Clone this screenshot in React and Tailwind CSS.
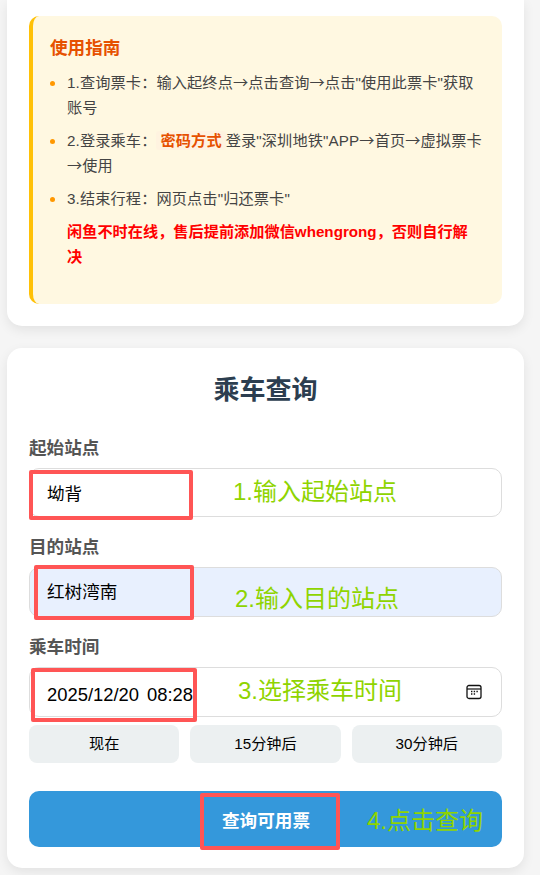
import React from 'react';

const FONT = "font-['Liberation_Sans','Noto_Sans_CJK_SC',sans-serif]";

// arrows are full width in the reference, Liberation's are too narrow
function Arrow() {
    return <span className="font-['Noto_Sans_CJK_SC',sans-serif] leading-none">→</span>;
}

function Note({ className, children }) {
    return <span className={`shrink-0 text-[24px] leading-[30px] font-normal text-[#8fd400] whitespace-nowrap ${className}`}>{children}</span>;
}

function Mark({ className, children }) {
    return <div className={`shrink-0 flex items-center border-[4px] border-[#ff5555] rounded-[2px] whitespace-nowrap ${className}`}>{children}</div>;
}

function GuideItem({ children }) {
    return (
        <li className="flex gap-3 leading-[25px]">
            <span className="shrink-0 mt-[11px] w-[5px] h-[5px] rounded-full bg-[#ff9800]" />
            <div>{children}</div>
        </li>
    );
}

function FieldLabel({ children }) {
    return <div className="text-[17.6px] leading-[24px] font-bold text-[#555] mb-2">{children}</div>;
}

function QuickButton({ children }) {
    return <button className="h-[38px] bg-[#ecf0f1] rounded-[8px] text-[15.2px] text-black">{children}</button>;
}

function CalendarIcon() {
    return (
        <svg className="shrink-0 ml-auto" width="16" height="16" viewBox="0 0 16 16" fill="none">
            <rect x="1" y="1.5" width="14" height="13" rx="2" stroke="#111" strokeWidth="1.3" />
            <path d="M1 5h14" stroke="#111" strokeWidth="1.2" />
            <path d="M5 7.5h1.4M7.7 7.5h1.4M10.4 7.5h1.4M5 10h1.4M7.7 10h1.4" stroke="#111" strokeWidth="1.4" />
        </svg>
    );
}

export default function App() {
    return (
        <div className={`${FONT} h-[875px] w-[540px] overflow-hidden bg-[#f5f5f5] pl-[7px] pr-[16px]`}>
            {/* Guide card */}
            <div className="bg-white rounded-b-[15px] shadow-[0_4px_12px_rgba(0,0,0,0.08)] px-[22px] pt-4 pb-[22px]">
                <div className="h-[288px] bg-[#fff8e1] border-l-4 border-[#ffc107] rounded-[10px] px-[17px] pt-[20px]">
                    <h3 className="text-[17.6px] leading-[24px] font-bold text-[#e65100] mb-[10px]">使用指南</h3>
                    <ul className="flex flex-col gap-2 text-[15.2px] tracking-[0.12px] text-[#444] mb-2">
                        <GuideItem>1.查询票卡：输入起终点<Arrow />点击查询<Arrow />点击"使用此票卡"获取账号</GuideItem>
                        <GuideItem>
                            2.登录乘车：<span className="inline-block font-bold text-[#e65100] bg-[#fff3e0] rounded-[3px] px-1 leading-[19px]">密码方式</span>登录"深圳地铁"APP<Arrow />首页<Arrow />虚拟票卡<Arrow />使用
                        </GuideItem>
                        <GuideItem>3.结束行程：网页点击"归还票卡"</GuideItem>
                    </ul>
                    <p className="pl-[17px] pr-[8px] text-[15.2px] leading-[25px] font-bold text-[#ff0000]">闲鱼不时在线，售后提前添加微信whengrong，否则自行解决</p>
                </div>
            </div>

            {/* Query card */}
            <div className="mt-[22px] bg-white rounded-[15px] shadow-[0_4px_12px_rgba(0,0,0,0.08)] px-[22px] pt-[22px] pb-[21px]">
                <h2 className="text-[26px] leading-[40px] font-bold text-center text-[#2c3e50] mb-[26px]">乘车查询</h2>

                <FieldLabel>起始站点</FieldLabel>
                <div className="h-[49px] mb-[18px] bg-white border border-[#ddd] rounded-[10px] flex items-center text-[17.6px] text-black">
                    <Mark className="-ml-px mt-[4px] w-[164px] h-[50px] pl-[14px]">坳背</Mark>
                    <Note className="ml-[40px] -mt-[2px]">1.输入起始站点</Note>
                </div>

                <FieldLabel>目的站点</FieldLabel>
                <div className="h-[50px] mb-[18px] bg-[#e8f0fe] border border-[#ddd] rounded-[10px] flex items-center text-[17.6px] text-black">
                    <Mark className="ml-[4px] w-[160px] h-[55px] pl-[9px]">红树湾南</Mark>
                    <Note className="ml-[41px] mt-[14px]">2.输入目的站点</Note>
                </div>

                <FieldLabel>乘车时间</FieldLabel>
                <div className="h-[50px] mb-2 bg-white border border-[#ddd] rounded-[10px] flex items-center pr-[19px] text-[18.4px] text-black">
                    <Mark className="ml-[1px] mt-[5px] w-[166px] h-[54px] pl-[12px] gap-2">
                        <span>2025/12/20</span>
                        <span>08:28</span>
                    </Mark>
                    <Note className="ml-[41px] -mt-[2px]">3.选择乘车时间</Note>
                    <CalendarIcon />
                </div>

                <div className="grid grid-cols-3 gap-[11px] mb-[28px]">
                    <QuickButton>现在</QuickButton>
                    <QuickButton>15分钟后</QuickButton>
                    <QuickButton>30分钟后</QuickButton>
                </div>

                <button className="flex items-center w-full h-[56px] bg-[#3498db] rounded-[10px] text-[17.6px] font-bold text-white">
                    <Mark className="ml-[171px] mt-[5px] w-[140px] h-[57px] pl-[18px]">查询可用票</Mark>
                    <Note className="ml-[27px] mt-[4px]">4.点击查询</Note>
                </button>
            </div>
        </div>
    );
}
